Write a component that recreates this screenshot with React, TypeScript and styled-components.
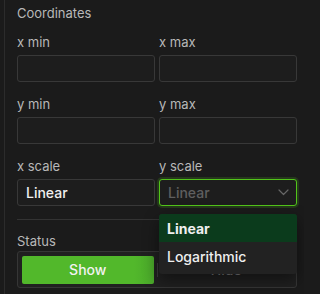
import styled, { createGlobalStyle } from "styled-components"

const GlobalStyle = createGlobalStyle`
  html, body {
    margin: 0;
    padding: 0;
    background: #1b1b1b;
  }
  body {
    font-family: Inter, "Noto Sans", sans-serif;
    -webkit-font-smoothing: antialiased;
  }
`

const Sidebar = styled.div`
  width: 300px;
  height: 294px;
  overflow: hidden;
  box-sizing: border-box;
  border-left: 1px solid #2c2c2c;
  margin-left: 4px;
  padding: 3px 7px 0 12px;
  background: #1b1b1b;
`

const SectionTitle = styled.div`
  font-size: 13px;
  line-height: 20px;
  color: #b8b8b8;
  margin-bottom: 9px;
`

const FieldGrid = styled.div`
  display: grid;
  grid-template-columns: 1fr 1fr;
  column-gap: 4px;
  row-gap: 12px;
`

const Field = styled.div`
  display: flex;
  flex-direction: column;
  position: relative;
`

const Label = styled.label`
  font-size: 13px;
  line-height: 20px;
  color: #b8b8b8;
  margin-bottom: 3px;
`

const TextInput = styled.input`
  box-sizing: border-box;
  height: 27px;
  width: 100%;
  background: #1d1d1d;
  border: 1px solid #383838;
  border-radius: 3px;
  padding: 0 8px;
  color: #f0f0f0;
  font-family: inherit;
  font-size: 14px;
  outline: none;
`

const SelectBox = styled.div<{ $open?: boolean }>`
  box-sizing: border-box;
  height: 27px;
  display: flex;
  align-items: center;
  justify-content: space-between;
  padding: 0 7px 0 8px;
  background: #1d1d1d;
  border: 1px solid ${p => (p.$open ? "#52c41a" : "#383838")};
  box-shadow: ${p => (p.$open ? "0 0 0 2px rgba(82, 196, 26, 0.18)" : "none")};
  border-radius: 3px;
  font-size: 14px;
  font-weight: 500;
  color: ${p => (p.$open ? "#5f5f5f" : "#f0f0f0")};
`

const Menu = styled.div`
  position: absolute;
  top: 58px;
  left: 0;
  right: 0;
  z-index: 10;
  background: #222222;
  border-radius: 3px;
  padding-bottom: 4px;
  box-shadow: 0 6px 16px rgba(0, 0, 0, 0.45);
  overflow: hidden;
`

const MenuItem = styled.div<{ $selected?: boolean }>`
  height: 28px;
  display: flex;
  align-items: center;
  padding: 0 8px;
  font-size: 14px;
  font-weight: ${p => (p.$selected ? 700 : 500)};
  color: #efefef;
  background: ${p => (p.$selected ? "#0b3b1c" : "transparent")};
`

const Divider = styled.hr`
  border: none;
  border-top: 1px solid #333333;
  margin: 13px 0 10px;
`

const Segmented = styled.div`
  box-sizing: border-box;
  display: flex;
  align-items: center;
  height: 37px;
  padding: 4px;
  background: #202020;
  border: 1px solid #363636;
  border-radius: 3px;
`

const Segment = styled.div<{ $active?: boolean }>`
  flex: 1;
  height: 28px;
  display: flex;
  align-items: center;
  justify-content: center;
  border-radius: 2px;
  font-size: 14px;
  font-weight: 500;
  color: ${p => (p.$active ? "#f2f2f2" : "#7a7a7a")};
  background: ${p => (p.$active ? "linear-gradient(90deg, #52b82b 0%, #52b82b 85%, #4aa82a 100%)" : "transparent")};
`

const SegmentSep = styled.div`
  width: 1px;
  height: 14px;
  margin: 0 3px;
  background: #3a3a3a;
`

const Chevron = () => (
  <svg width="11" height="7" viewBox="0 0 11 7" fill="none">
    <path d="M1 1l4.5 4.5L10 1" stroke="#666" strokeWidth="1.2" strokeLinecap="round" strokeLinejoin="round" />
  </svg>
)

export default function App() {
  return (
    <>
      <GlobalStyle />
      <Sidebar>
        <SectionTitle>Coordinates</SectionTitle>
        <FieldGrid>
          <Field>
            <Label>x min</Label>
            <TextInput />
          </Field>
          <Field>
            <Label>x max</Label>
            <TextInput />
          </Field>
          <Field>
            <Label>y min</Label>
            <TextInput />
          </Field>
          <Field>
            <Label>y max</Label>
            <TextInput />
          </Field>
          <Field>
            <Label>x scale</Label>
            <SelectBox>Linear</SelectBox>
          </Field>
          <Field>
            <Label>y scale</Label>
            <SelectBox $open>
              Linear
              <Chevron />
            </SelectBox>
            <Menu>
              <MenuItem $selected>Linear</MenuItem>
              <MenuItem>Logarithmic</MenuItem>
            </Menu>
          </Field>
        </FieldGrid>
        <Divider />
        <Label>Status</Label>
        <Segmented>
          <Segment $active>Show</Segment>
          <SegmentSep />
          <Segment>Hide</Segment>
        </Segmented>
      </Sidebar>
    </>
  )
}
